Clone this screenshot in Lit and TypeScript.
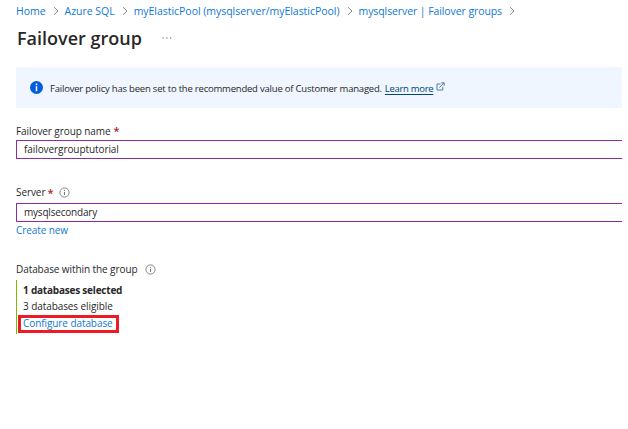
import { LitElement, html, css } from "lit";
import { customElement } from "lit/decorators.js";

const chevron = html`<svg class="chevron" width="6" height="10" viewBox="0 0 6 10">
  <path d="M1 1.2 5 5 1 8.8" fill="none" stroke="#777" stroke-width="0.9" />
</svg>`;

const infoOutline = html`<svg class="info" width="11" height="11" viewBox="0 0 11 11">
  <circle cx="5.5" cy="5.5" r="4.6" fill="none" stroke="#777" stroke-width="0.9" />
  <path d="M5.5 4.8V8M5.5 2.9V3.9" stroke="#777" stroke-width="1" />
</svg>`;

@customElement("app-root")
export class AppRoot extends LitElement {
  static styles = css`
    :host {
      display: block;
      box-sizing: border-box;
      height: 429px;
      padding: 3px 6px 0 16px;
      background: #fff;
      color: #292827;
      font: 10px/14px "Open Sans", "Noto Sans", sans-serif;
      letter-spacing: -0.08px;
      white-space: nowrap;
      overflow: hidden;
    }
    svg { display: block; flex: none; }
    a { color: #0f78d4; text-decoration: none; }
    .crumbs { display: flex; align-items: center; height: 15px; font-size: 10.5px; letter-spacing: -0.03px; }
    .crumbs .chevron { margin: 1px 6px 0 7px; }
    .crumbs .last { letter-spacing: -0.09px; }
    .title { display: flex; align-items: center; height: 26px; margin-top: 7px; padding-left: 1px; }
    h1 { margin: 0; font-size: 18px; line-height: 26px; font-weight: 600; letter-spacing: 0; }
    .more { margin-left: 20px; }
    .banner {
      display: flex;
      align-items: center;
      height: 41px;
      margin-top: 16px;
      padding-left: 14px;
      box-sizing: border-box;
      background: #eff6ff;
      border-radius: 1px;
      font-size: 9.5px;
      letter-spacing: -0.21px;
    }
    .banner .text { margin-left: 7px; margin-top: 3px; }
    .banner a { color: #004578; text-decoration: underline; text-underline-offset: 2px; margin-left: 3px; margin-top: 3px; letter-spacing: -0.3px; }
    .ext { margin: -3px 0 0 3px; }
    .label { display: flex; align-items: center; height: 14px; }
    .req { color: #a4262c; margin-left: 3px; font-size: 11px; font-weight: 600; }
    .label .info { margin-left: 7px; }
    .server .info { margin-left: 6px; }
    .first { margin-top: 16px; }
    .server { margin-top: 26px; }
    .server .req { margin-top: 1px; margin-left: 2px; }
    .group { margin-top: 25px; }
    .input {
      box-sizing: border-box;
      height: 19px;
      margin-top: 2px;
      padding-left: 7px;
      border: 1px solid #8a2da5;
      border-right: 0;
      border-radius: 1px 0 0 1px;
      line-height: 17px;
    }
    .server + .input { margin-top: 4px; letter-spacing: -0.2px; }
    .create { display: flex; height: 14px; margin-top: 1px; }
    .summary {
      box-sizing: border-box;
      height: 54px;
      margin-top: 4px;
      padding: 2px 0 0 6px;
      border-left: 1px solid #7fba00;
      line-height: 16px;
    }
    .strong { font-weight: 700; letter-spacing: -0.21px; }
    .highlight {
      box-sizing: border-box;
      width: 101px;
      height: 18px;
      margin: 1px 0 0 -5px;
      padding-left: 2px;
      border: 3px solid #ed1c24;
      line-height: 10px;
    }
  `;

  render() {
    return html`
      <nav class="crumbs">
        <a>Home</a>${chevron}<a>Azure SQL</a>${chevron}<a>myElasticPool (mysqlserver/myElasticPool)</a>${chevron}<a class="last">mysqlserver | Failover groups</a>${chevron}
      </nav>
      <header class="title">
        <h1>Failover group</h1>
        <svg class="more" width="10" height="2" viewBox="0 0 10 2">
          <path d="M0.5 1h1.2M4.3 1h1.2M8.1 1h1.2" stroke="#555" stroke-width="1.1" />
        </svg>
      </header>
      <section class="banner">
        <svg width="13" height="13" viewBox="0 0 13 13">
          <circle cx="6.5" cy="6.5" r="6.5" fill="#015cda" />
          <path d="M6.5 5.3V10.3M6.5 2.6V4.2" stroke="#fff" stroke-width="1.5" />
        </svg>
        <span class="text">Failover policy has been set to the recommended value of Customer managed.</span>
        <a>Learn more</a>
        <svg class="ext" width="9" height="9" viewBox="0 0 9 9">
          <path d="M4.5 2H1V8H6.8V4.8M3.4 5.6 7.8 1M5.2 0.8H8.2V3.8" fill="none" stroke="#3f7299" stroke-width="0.9" />
        </svg>
      </section>
      <div class="label first"><span>Failover group name</span><span class="req">*</span></div>
      <div class="input">failovergrouptutorial</div>
      <div class="label server"><span>Server</span><span class="req">*</span>${infoOutline}</div>
      <div class="input">mysqlsecondary</div>
      <div class="create"><a>Create new</a></div>
      <div class="label group"><span>Database within the group</span>${infoOutline}</div>
      <div class="summary">
        <div class="strong">1 databases selected</div>
        <div>3 databases eligible</div>
        <div class="highlight"><a>Configure database</a></div>
      </div>
    `;
  }
}
